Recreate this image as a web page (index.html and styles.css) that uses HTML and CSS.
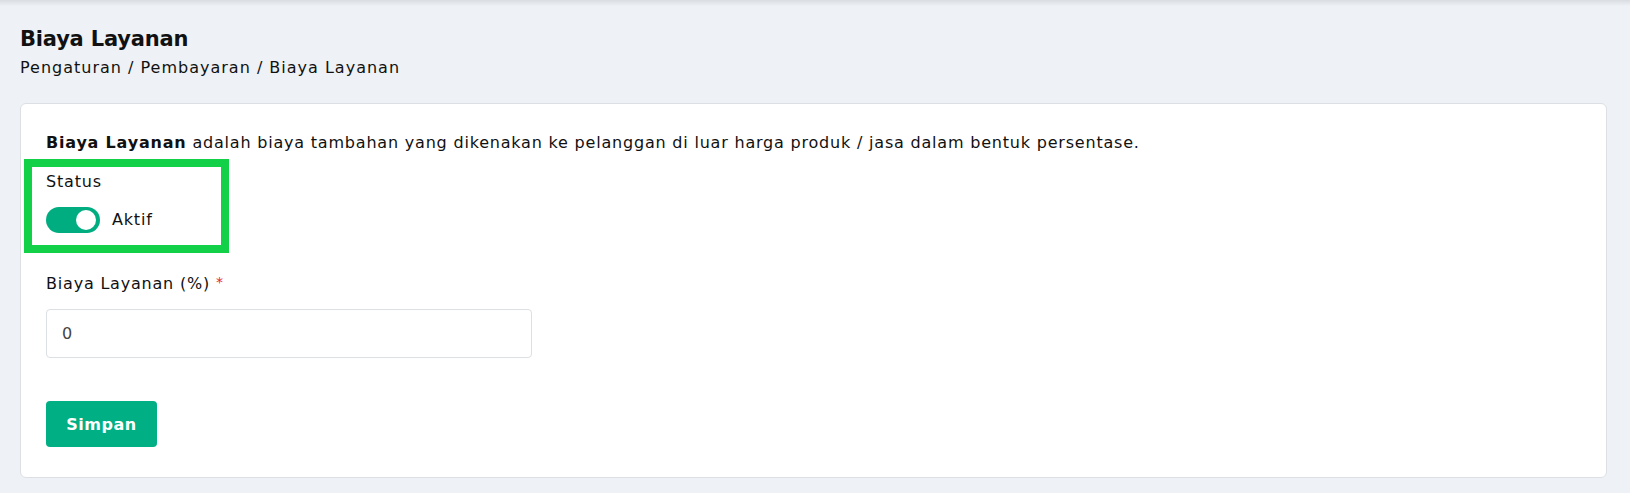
FILE: index.html
```html
<!DOCTYPE html>
<html lang="id">
<head>
<meta charset="utf-8">
<title>Biaya Layanan</title>
<link rel="stylesheet" href="styles.css">
</head>
<body>
<div class="topshadow"></div>
<main class="page">
  <header class="page-head">
    <h1 class="page-title">Biaya Layanan</h1>
    <div class="breadcrumb">Pengaturan / Pembayaran / Biaya Layanan</div>
  </header>
  <section class="card">
    <p class="desc"><b>Biaya Layanan</b> adalah biaya tambahan yang dikenakan ke pelanggan di luar harga produk / jasa dalam bentuk persentase.</p>
    <div class="status-group">
      <div class="label">Status</div>
      <div class="switch-row">
        <span class="switch"><span class="knob"></span></span>
        <span class="switch-text">Aktif</span>
      </div>
    </div>
    <div class="field">
      <label class="label">Biaya Layanan (%) <span class="req">*</span></label>
      <div class="input">0</div>
    </div>
    <button class="btn">Simpan</button>
    <div class="highlight"></div>
  </section>
</main>
</body>
</html>
```
FILE: styles.css
```css
html, body {
  margin: 0;
  padding: 0;
  background: #eef1f5;
}
body {
  font-family: "DejaVu Sans", sans-serif;
  color: #111;
  font-size: 16px;
  letter-spacing: 0.8px;
}
.topshadow {
  height: 6px;
  background: linear-gradient(#d9dce0, #eef1f5);
}
.page {
  padding: 21px 23px 0 20px;
}
.page-title {
  margin: 0;
  font-size: 21px;
  line-height: 25px;
  font-weight: 700;
  letter-spacing: -0.2px;
  color: #111;
}
.breadcrumb {
  margin-top: 5px;
  line-height: 22px;
  letter-spacing: 1px;
  color: #111;
}
.card {
  position: relative;
  margin-top: 24px;
  background: #fff;
  border: 1px solid #dcdfe3;
  border-radius: 6px;
  padding: 28px 25px 29px 25px;
  height: 316px;
  box-sizing: content-box;
}
.desc {
  margin: 0;
  line-height: 22px;
}
.desc b {
  font-weight: 700;
}
.status-group {
  margin-top: 17px;
}
.label {
  display: block;
  line-height: 22px;
}
.switch-row {
  margin-top: 14px;
  display: flex;
  align-items: center;
  gap: 12px;
}
.switch {
  width: 54px;
  height: 26px;
  border-radius: 13px;
  background: #00ad80;
  position: relative;
  flex: none;
}
.knob {
  position: absolute;
  right: 4px;
  top: 3px;
  width: 20px;
  height: 20px;
  border-radius: 50%;
  background: #fff;
}
.switch-text {
  line-height: 22px;
}
.field {
  margin-top: 38px;
}
.req {
  color: #e5252a;
  font-size: 14px;
  vertical-align: 2px;
}
.input {
  margin-top: 14px;
  width: 486px;
  height: 49px;
  box-sizing: border-box;
  border: 1px solid #dcdfe3;
  border-radius: 4px;
  padding: 0 15px;
  display: flex;
  align-items: center;
  color: #444;
}
.btn {
  margin-top: 43px;
  width: 111px;
  height: 46px;
  border: 0;
  border-radius: 4px;
  background: #00b084;
  color: #fff;
  font-family: "DejaVu Sans", sans-serif;
  font-weight: 700;
  font-size: 16px;
  letter-spacing: 0.5px;
  padding: 0;
  cursor: pointer;
}
.highlight {
  position: absolute;
  left: 3px;
  top: 55px;
  width: 189px;
  height: 78px;
  border: 8px solid #12d048;
  pointer-events: none;
}
```
